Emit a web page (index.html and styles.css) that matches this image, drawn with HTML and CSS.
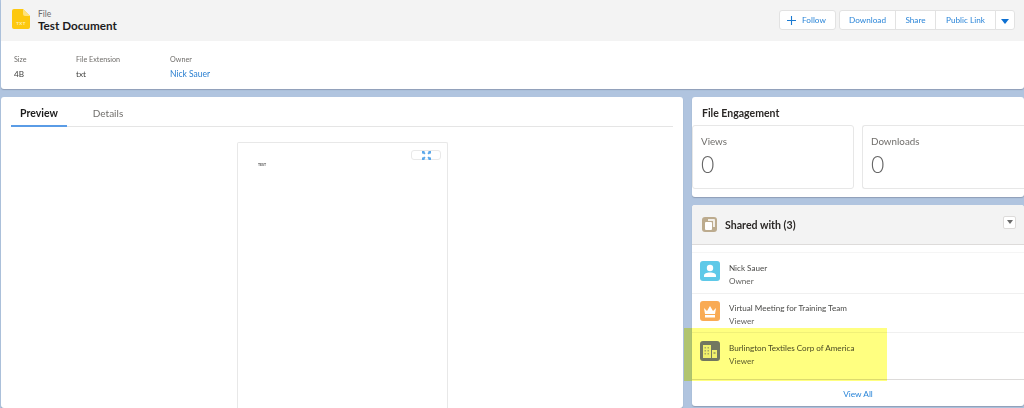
FILE: index.html
```html
<!DOCTYPE html>
<html lang="en">
<head>
<meta charset="utf-8">
<title>Test Document</title>
<link rel="stylesheet" href="styles.css">
</head>
<body>
<div class="page">
  <header class="card head">
    <div class="head-top">
      <div class="title-group">
        <svg class="file-icon" width="18" height="20" viewBox="0 0 18 20"><path d="M2 0H11L18 7V18a2 2 0 0 1-2 2H2a2 2 0 0 1-2-2V2a2 2 0 0 1 2-2z" fill="#fdc80f"/><path d="M11 0L18 7H13a2 2 0 0 1-2-2z" fill="#fee27e"/><text x="9" y="16" text-anchor="middle" class="file-ext">TXT</text></svg>
        <div>
          <div class="crumb">File</div>
          <h1 class="title">Test Document</h1>
        </div>
      </div>
      <div class="actions">
        <button class="btn follow"><svg width="9" height="9" viewBox="0 0 9 9"><path d="M4.500 0V9M0 4.500H9" stroke="#1b7ad1" stroke-width="1.100"/></svg>Follow</button>
        <div class="btn-group">
          <button class="btn seg w-dl">Download</button>
          <button class="btn seg w-sh">Share</button>
          <button class="btn seg w-pl">Public Link</button>
          <button class="btn seg w-ar"><span class="caret"></span></button>
        </div>
      </div>
    </div>
    <div class="fields">
      <div class="field f1"><div class="label">Size</div><div class="value">4B</div></div>
      <div class="field f2"><div class="label">File Extension</div><div class="value">txt</div></div>
      <div class="field"><div class="label">Owner</div><div class="value link">Nick Sauer</div></div>
    </div>
  </header>
  <div class="columns">
    <main class="card left">
      <nav class="tabs">
        <div class="tab active">Preview</div>
        <div class="tab">Details</div>
      </nav>
      <div class="sheet">
        <button class="expand"><svg width="9" height="9" viewBox="0 0 9 9"><path d="M0 0H3L2.200 .8 3.600 2.200 2.200 3.600 .8 2.200 0 3zM9 0V3L8.200 2.200 6.800 3.600 5.400 2.200 6.800 .8 6 0zM0 9V6L.8 6.800 2.200 5.400 3.600 6.800 2.200 8.200 3 9zM9 9H6L6.800 8.200 5.400 6.800 6.800 5.400 8.200 6.800 9 6z" fill="#5aa7ea"/></svg></button>
        <div class="sheet-text">TEST</div>
      </div>
    </main>
    <aside class="side">
      <section class="card engage">
        <h2 class="engage-title">File Engagement</h2>
        <div class="stats">
          <div class="stat"><div class="stat-label">Views</div><div class="stat-num">0</div></div>
          <div class="stat last"><div class="stat-label">Downloads</div><div class="stat-num">0</div></div>
        </div>
      </section>
      <section class="card shared">
        <div class="shared-head">
          <span class="avatar tan"><svg width="10" height="11" viewBox="0 0 10 11"><path d="M3 0H9a1 1 0 0 1 1 1V8H8V2H3z" fill="#fff" opacity=".8"/><rect x="0" y="3" width="7" height="8" rx="1" fill="#fff"/></svg></span>
          <h2 class="shared-title">Shared with (3)</h2>
          <button class="mini"><span class="mini-caret"></span></button>
        </div>
        <ul class="rows">
          <li class="row r1">
            <span class="avatar sky"><svg width="14" height="14" viewBox="0 0 14 14"><circle cx="7" cy="4" r="3.200" fill="#fff"/><path d="M1 13V11.500C1 9.500 3.500 8.500 7 8.500S13 9.500 13 11.500V13z" fill="#fff"/></svg></span>
            <div><div class="row-name">Nick Sauer</div><div class="row-role">Owner</div></div>
          </li>
          <li class="row r2">
            <span class="avatar orange"><svg width="14" height="13" viewBox="0 0 14 13"><path d="M1 3L4 6 7 1 10 6 13 3 12 9H2z" fill="#fff"/><rect x="2" y="10" width="10" height="2.500" fill="#fff"/></svg></span>
            <div><div class="row-name">Virtual Meeting for Training Team</div><div class="row-role">Viewer</div></div>
          </li>
          <li class="row r3">
            <span class="avatar slate"><svg width="14" height="13" viewBox="0 0 14 13"><path d="M0 0H8V13H0zM9 5H14V13H9z" fill="#f0f0d8"/><path d="M1.500 2H3V3.500H1.500zM4.500 2H6V3.500H4.500zM1.500 5H3V6.500H1.500zM4.500 5H6V6.500H4.500zM1.500 8H3V9.500H1.500zM4.500 8H6V9.500H4.500zM10.500 7H12.500V9H10.500z" fill="#a8aac8"/></svg></span>
            <div><div class="row-name">Burlington Textiles Corp of America</div><div class="row-role">Viewer</div></div>
          </li>
        </ul>
        <div class="view-all">View All</div>
      </section>
    </aside>
  </div>
</div>
<div class="highlight"></div>
</body>
</html>
```
FILE: styles.css
```css
* { box-sizing: border-box; }
html, body { margin: 0; height: 408px; overflow: hidden; }
body {
  background: #b0c4df;
  font-family: Lato, "Open Sans", "Liberation Sans", sans-serif;
  color: #3e3e3c;
  position: relative;
}
h1, h2, ul { margin: 0; padding: 0; }
ul { list-style: none; }
button { font-family: inherit; cursor: pointer; }
.page { padding-left: 1px; display: flex; flex-direction: column; gap: 8px; filter: blur(.5px); }
.card { background: #fff; border-radius: 3px; box-shadow: 0 1px 1px rgba(80,90,110,.35); }
.head { height: 89px; display: flex; flex-direction: column; }
.head-top {
  height: 41px; background: #f3f3f3; display: flex; justify-content: space-between;
  align-items: flex-start; padding: 10px 9px 0 11px;
}
.title-group { display: flex; gap: 8px; align-items: flex-start; }
.file-icon { display: block; margin-top: -1px; }
.file-ext { font-size: 4.500px; fill: #fff1b8; font-weight: 700; letter-spacing: .3px; }
.crumb { font-size: 8.500px; line-height: 9px; color: #6b6b6b; }
.title { font-size: 11.700px; line-height: 15px; font-weight: 700; color: #1c1c1c; margin-top: -1px; }
.actions { display: flex; gap: 3px; }
.btn {
  height: 20px; border: 1px solid #e2e2e2; background: #fff; color: #2a85d8;
  font-size: 8.200px; padding: 0; display: flex; align-items: center; justify-content: center;
}
.follow { width: 57px; border-radius: 3px; gap: 6px; padding-right: 2px; }
.btn-group { display: flex; }
.seg { margin-left: -1px; }
.seg:first-child { margin-left: 0; border-radius: 3px 0 0 3px; }
.seg:last-child { border-radius: 0 3px 3px 0; }
.w-dl { width: 57px; }
.w-sh { width: 41px; }
.w-pl { width: 61px; }
.w-ar { width: 20px; }
.caret { width: 0; height: 0; border: 4px solid transparent; border-top: 5px solid #0d70d2; border-bottom: 0; margin-top: 3px; }
.fields { display: flex; padding: 13px 0 0 13px; }
.f1 { width: 62px; }
.f2 { width: 94px; }
.label { color: #706e6b; font-size: 7.200px; line-height: 11px; }
.value { font-size: 8.200px; line-height: 12px; margin-top: 3px; color: #3e3e3c; }
.link { color: #2a7fd0; font-size: 8.500px; }
.columns { display: flex; gap: 9px; align-items: flex-start; }
.left { width: 682px; height: 311px; padding: 0 10px; overflow: hidden; }
.tabs { display: flex; height: 30px; border-bottom: 1px solid #e5e5e5; gap: 13px; }
.tab { font-size: 10px; line-height: 32px; color: #706e6b; width: 56px; text-align: center; }
.tab.active { color: #1c1c1c; font-size: 10.500px; font-weight: 700; border-bottom: 2px solid #5a9ce6; height: 30px; }
.sheet {
  position: relative; width: 211px; height: 266px; margin: 15px 0 0 226px;
  border: 1px solid #e8e8e8; border-radius: 2px 2px 0 0; border-bottom: 0;
}
.expand {
  position: absolute; top: 7px; right: 6px; width: 30px; height: 10px;
  border: 1px solid #e9e9e9; border-radius: 3px; background: #fff; padding: 0;
  display: flex; align-items: center; justify-content: center;
}
.sheet-text { font-size: 3.500px; color: #555; font-weight: 700; padding: 20px 0 0 20px; line-height: 5px; }
.side { flex: 1; display: flex; flex-direction: column; gap: 8px; min-width: 0; }
.engage { height: 100px; }
.engage-title { font-size: 10.500px; line-height: 14px; font-weight: 700; color: #2b2826; padding: 9px 0 0 10px; height: 28px; }
.stats { display: flex; gap: 8px; }
.stat { width: 162px; height: 64px; border: 1px solid #e7e7e7; border-radius: 3px; padding: 8px; }
.stat.last { flex: 1; border-right: 0; border-radius: 3px 0 0 3px; }
.stat-label { font-size: 9.800px; line-height: 14px; color: #706e6b; }
.stat-num { font-size: 23px; line-height: 30px; font-weight: 300; color: #666; margin-top: 1px; }
.shared { height: 201px; display: flex; flex-direction: column; }
.shared-head {
  height: 40px; background: #f3f3f3; border-bottom: 1px solid #dddbda;
  display: flex; align-items: center; padding: 0 8px 0 10px; gap: 8px;
  border-radius: 3px 3px 0 0; flex: none;
}
.avatar { width: 20px; height: 20px; border-radius: 3px; display: flex; align-items: center; justify-content: center; flex: none; }
.tan { width: 15px; height: 15px; background: #bcab8e; }
.sky { background: #5fc9e8; }
.orange { background: #f9ab55; }
.slate { background: #7277c0; }
.shared-title { font-size: 10.600px; font-weight: 700; color: #2b2826; flex: 1; }
.mini {
  width: 13px; height: 13px; border: 1px solid #dddbda; border-radius: 2px; background: #fff;
  padding: 0; display: flex; align-items: center; justify-content: center; margin-top: -5px;
}
.mini-caret { width: 0; height: 0; border: 3px solid transparent; border-top: 4px solid #6b6b6b; border-bottom: 0; }
.rows { padding-top: 7px; }
.row {
  display: flex; align-items: flex-start; gap: 9px; padding: 8px 0 0 8px;
  border-bottom: 1px solid #f0f0f0;
}
.r1 { height: 42px; padding-top: 8px; border-top: 1px solid #f5f5f5; }
.r2 { height: 39px; padding-top: 7px; }
.r3 { height: 47px; border-bottom-color: #dddbda; }
.row-name { font-size: 8.100px; line-height: 12.500px; color: #4a4a48; margin-top: 1px; }
.row-role { font-size: 8.100px; line-height: 12.500px; color: #5f5f5d; }
.view-all { height: 26px; line-height: 28px; font-size: 8.300px; color: #2a85d8; text-align: center; }
.highlight {
  position: absolute; left: 684px; top: 328px; width: 203px; height: 53px;
  background: #ffff80; mix-blend-mode: multiply; pointer-events: none;
}
```
